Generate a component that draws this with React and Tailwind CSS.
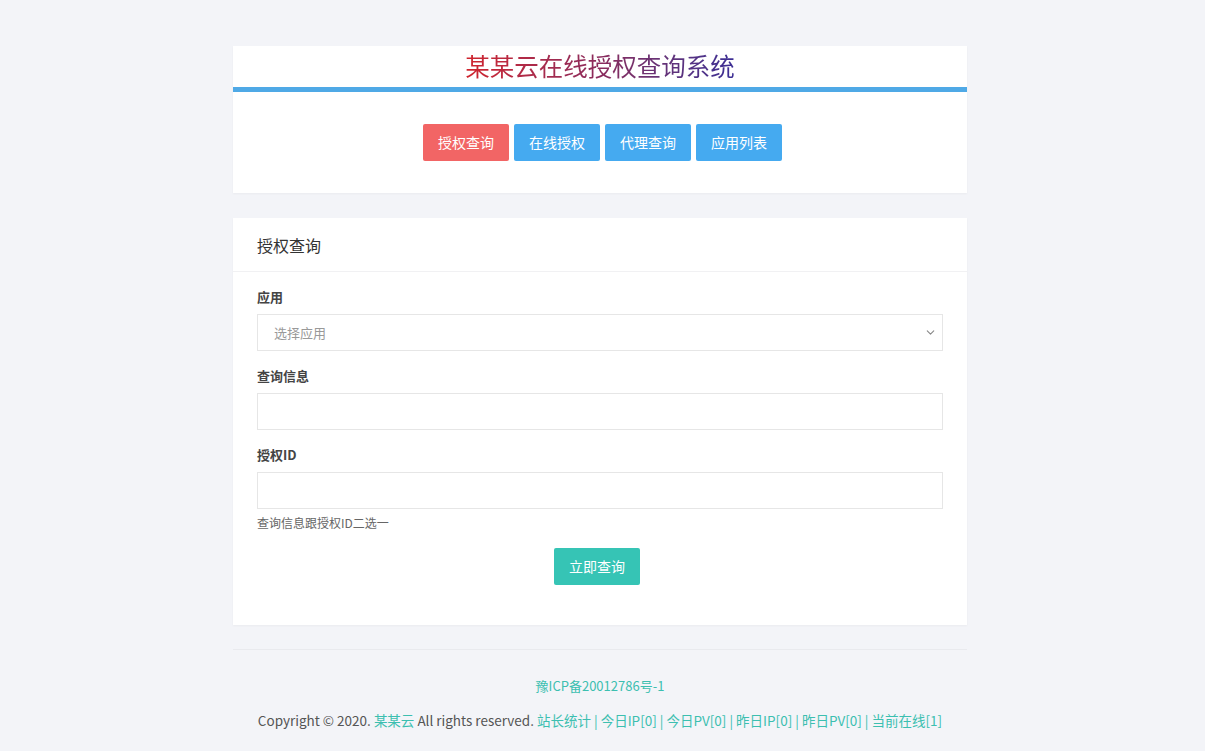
import { ChevronDown } from 'lucide-react'

const NAV = [
  { label: '授权查询', active: true },
  { label: '在线授权' },
  { label: '代理查询' },
  { label: '应用列表' },
]

const FONT = { fontFamily: '"Noto Sans CJK SC", "Liberation Sans", sans-serif' }

export default function App() {
  return (
    <div className="min-h-[751px] bg-[#f3f4f8] text-[#333]" style={FONT}>
      <div className="ml-[233px] w-[734px] pt-[46px]">
        {/* Header card */}
        <div className="bg-white shadow-[0_1px_2px_rgba(0,0,0,0.04)]">
          <div className="flex h-[41px] items-center justify-center">
            <h1 className="bg-gradient-to-r from-[#d0232b] via-[#8a2a5c] to-[#3a2c94] bg-clip-text text-[24.5px] leading-none text-transparent">
              某某云在线授权查询系统
            </h1>
          </div>
          <div className="h-[5px] bg-[#4fa9e6]" />
          <div className="flex justify-center gap-[5px] pt-[32px] pb-[32px] pl-[5px]">
            {NAV.map((n) => (
              <button
                key={n.label}
                className={`h-[37px] w-[86px] rounded-[2px] text-[14px] text-white ${
                  n.active ? 'bg-[#f26565]' : 'bg-[#45aaf0]'
                }`}
              >
                {n.label}
              </button>
            ))}
          </div>
        </div>

        {/* Query card */}
        <div className="mt-[25px] bg-white shadow-[0_1px_2px_rgba(0,0,0,0.04)]">
          <div className="flex h-[54px] items-center border-b border-[#f1f1f3] px-6 text-[16px] text-[#333]">
            授权查询
          </div>
          <div className="px-6 pt-[16px] pb-[40px]">
            <label className="block text-[13px] font-bold leading-[18px] text-[#444]">应用</label>
            <div className="relative mt-[8px] flex h-[37px] items-center border border-[#e6e6e6] px-4 text-[13px] text-[#999]">
              选择应用
              <ChevronDown className="absolute right-[5px] h-[13px] w-[13px] text-[#888]" strokeWidth={2} />
            </div>

            <label className="mt-[16px] block text-[13px] font-bold leading-[18px] text-[#444]">查询信息</label>
            <input className="mt-[8px] block h-[37px] w-full border border-[#e6e6e6] px-4 text-[13px] outline-none" />

            <label className="mt-[16px] block text-[13px] font-bold leading-[18px] text-[#444]">授权ID</label>
            <input className="mt-[8px] block h-[37px] w-full border border-[#e6e6e6] px-4 text-[13px] outline-none" />

            <p className="mt-[5px] text-[12px] leading-[18px] text-[#666]">查询信息跟授权ID二选一</p>

            <div className="mt-[16px] flex justify-center pr-[6px]">
              <button className="h-[37px] w-[86px] rounded-[2px] bg-[#36c4b5] text-[14px] text-white">
                立即查询
              </button>
            </div>
          </div>
        </div>

        {/* Footer */}
        <div className="mt-[24px] border-t border-[#e9eaee] pt-[27px] pb-[16px] text-center">
          <p className="text-[13px] leading-[18px] text-[#3cbfb0]">豫ICP备20012786号-1</p>
          <p className="mt-[16px] text-[13.5px] leading-[18px] text-[#555]">
            Copyright © 2020. <span className="text-[#3cbfb0]">某某云</span> All rights reserved.{' '}
            <span className="text-[#3cbfb0]">
              站长统计 | 今日IP[0] | 今日PV[0] | 昨日IP[0] | 昨日PV[0] | 当前在线[1]
            </span>
          </p>
        </div>
      </div>
    </div>
  )
}
